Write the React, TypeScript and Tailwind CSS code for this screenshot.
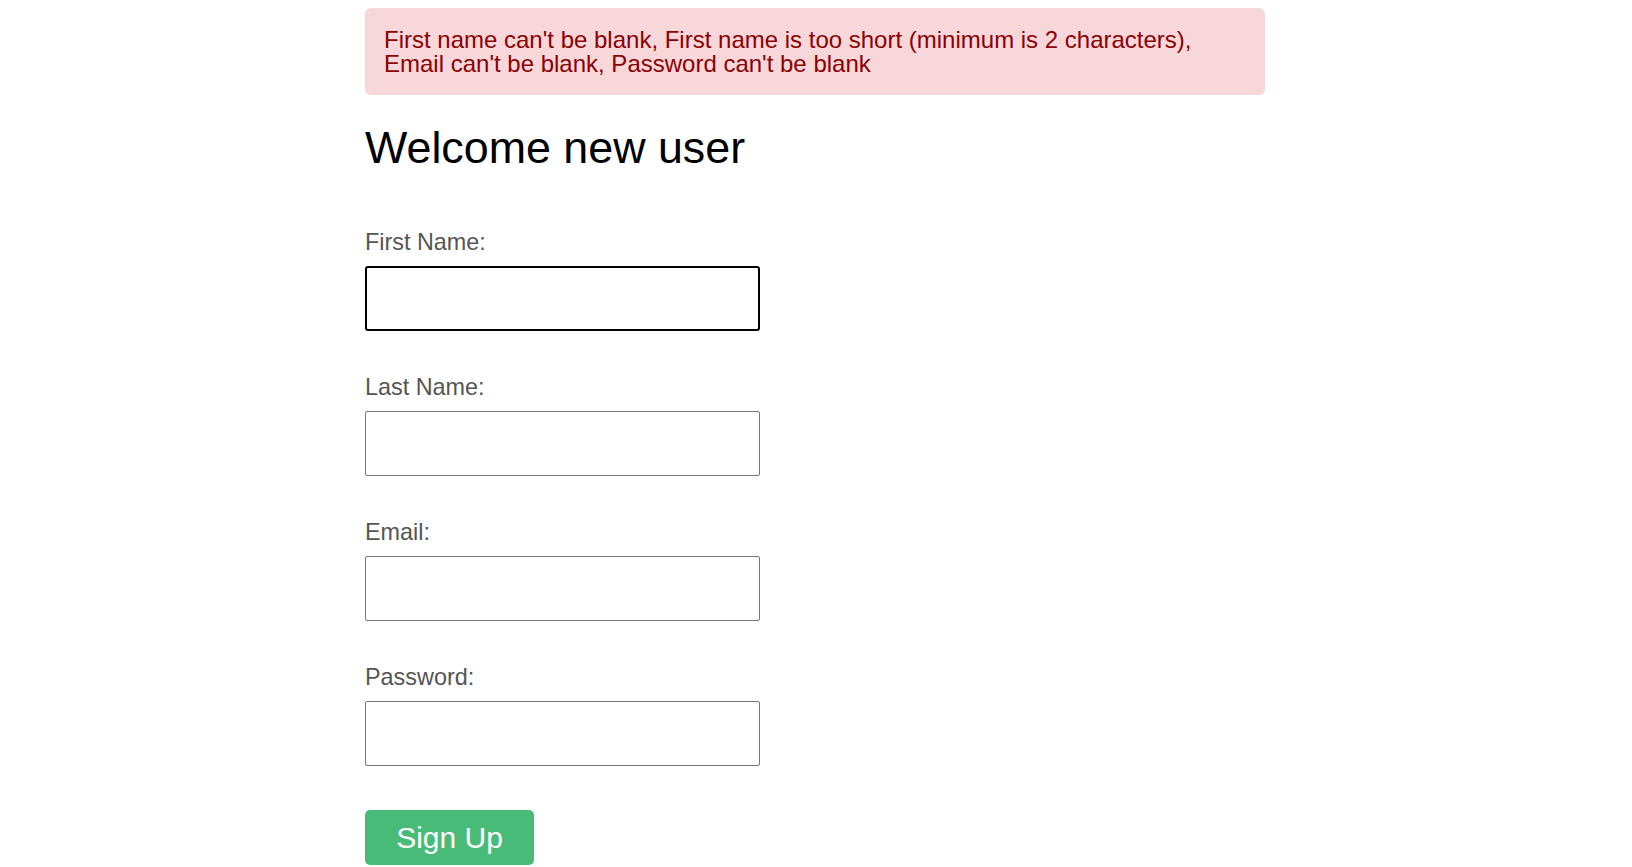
import React from "react";

const Field = (props: { label: string; type?: string; focused?: boolean }) => (
  <div className="flex flex-col">
    <label className="text-[23.4px] text-[#555555] leading-[27px] mb-[10px]">{props.label}</label>
    <input
      type={props.type || "text"}
      className={
        props.focused
          ? "w-[395px] h-[65px] rounded-[3px] border-2 border-black bg-white px-2 outline-none"
          : "w-[395px] h-[65px] rounded-[2px] border border-[#767676] bg-white px-2 outline-none"
      }
    />
  </div>
);

export default function App() {
  return (
    <div className="min-h-screen bg-white font-['Liberation_Sans',Arial,sans-serif]">
      <div className="w-[902px] mx-auto pt-2">
        <div className="w-[900px] bg-[#f8d7da] text-[#8b0000] rounded-[6px] px-[19px] pt-[20px] pb-[19px] text-[24px] leading-[24px]">
          First name can't be blank, First name is too short (minimum is 2 characters),
          <br />
          Email can't be blank, Password can't be blank
        </div>

        <h1 className="text-[44.8px] leading-[52px] text-black mt-[26px]">Welcome new user</h1>

        <form
          onSubmit={e => { e.preventDefault(); }}
          className="flex flex-col gap-[43px] mt-[56px]"
        >
          <Field label="First Name:" focused />
          <Field label="Last Name:" />
          <Field label="Email:" type="email" />
          <Field label="Password:" type="password" />
          <div className="mt-[1px]">
            <button
              type="submit"
              className="w-[169px] h-[55px] rounded-[5px] bg-[#48bb78] text-white text-[30px] leading-none"
            >
              Sign Up
            </button>
          </div>
        </form>
      </div>
    </div>
  );
}
